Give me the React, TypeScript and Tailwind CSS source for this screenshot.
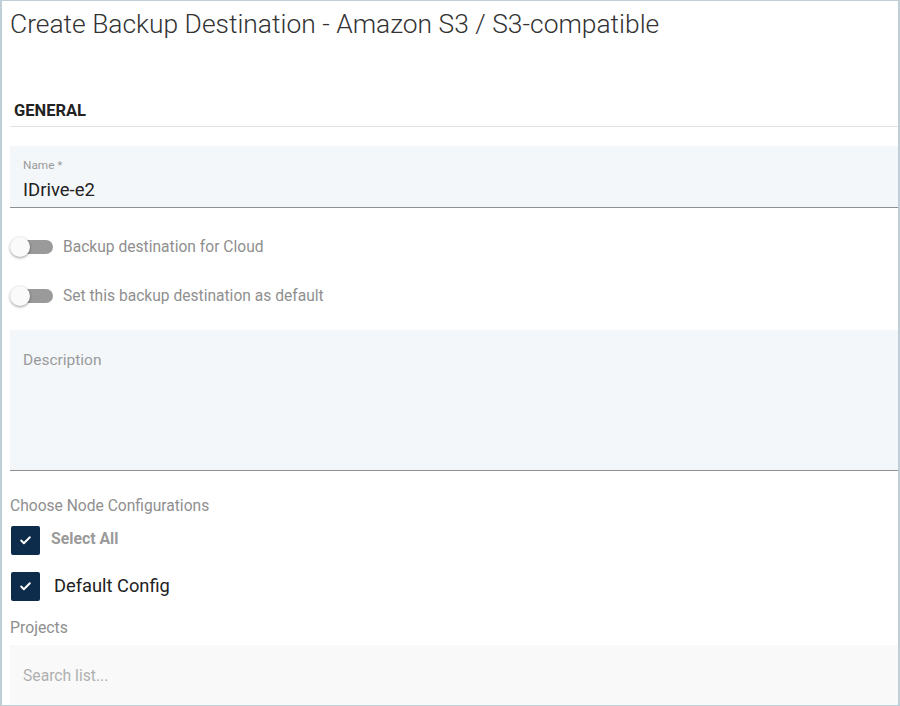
import { Check } from "lucide-react";

function Toggle({ label }: { label: string }) {
  return (
    <div className="flex h-[20px] items-center gap-[10px]">
      <div className="relative h-[20px] w-[43px]">
        <div className="absolute left-[5px] top-[3px] h-[14px] w-[38px] rounded-full bg-[#9a9a9a]" />
        <div className="absolute left-0 top-0 h-[20px] w-[20px] rounded-full bg-[#fafafa] shadow-[0_1px_3px_rgba(0,0,0,0.4)]" />
      </div>
      <span className="text-[15.6px] leading-[20px] text-[#8f8f8f]">{label}</span>
    </div>
  );
}

function CheckBox({ label, bold }: { label: string; bold?: boolean }) {
  return (
    <div className="flex h-[29px] items-center">
      <div className="ml-[1px] flex h-[29px] w-[29px] items-center justify-center rounded-[2px] bg-[#0d2b4b]">
        <Check className="h-[13px] w-[13px] text-white" strokeWidth={3.5} />
      </div>
      {bold ? (
        <span className="ml-[11px] -mt-[3px] text-[15.8px] font-bold leading-[20px] text-[#9a9a9a]">{label}</span>
      ) : (
        <span className="ml-[14px] -mt-[2px] text-[18.3px] leading-[22px] text-[#222]">{label}</span>
      )}
    </div>
  );
}

export default function App() {
  return (
    <div className="h-[706px] w-[900px] overflow-hidden border-y border-l-2 border-r-2 border-[#bfcfd7] bg-white font-['Roboto',sans-serif]">
      <div className="pl-[8px]">
        <h1 className="mt-[6px] text-[26.4px] font-light leading-[34px] text-[#333]">
          Create Backup Destination - Amazon S3 / S3-compatible
        </h1>

        <div className="mt-[60px] border-b border-[#e2e2e2] pb-[5px] pl-[4px] text-[16.5px] font-bold leading-[20px] text-[#222]">
          GENERAL
        </div>

        <div className="mt-[19px] h-[62px] border-b border-[#8f8f8f] bg-[#f4f7fa] px-[13px] pt-[12px]">
          <div className="text-[11.8px] leading-[14px] text-[#9a9a9a]">Name *</div>
          <div className="mt-[7px] text-[18.5px] leading-[22px] text-[#222]">IDrive-e2</div>
        </div>

        <div className="mt-[29px]">
          <Toggle label="Backup destination for Cloud" />
        </div>
        <div className="mt-[29px]">
          <Toggle label="Set this backup destination as default" />
        </div>

        <div className="mt-[24px] h-[141px] border-b border-[#8f8f8f] bg-[#f4f7fa] px-[13px] pt-[21px]">
          <div className="text-[15.5px] leading-[18px] text-[#9a9a9a]">Description</div>
        </div>

        <div className="mt-[26px] text-[15.6px] leading-[18px] text-[#8f8f8f]">Choose Node Configurations</div>

        <div className="mt-[11px]">
          <CheckBox label="Select All" bold />
        </div>
        <div className="mt-[17px]">
          <CheckBox label="Default Config" />
        </div>

        <div className="mt-[17px] text-[15.8px] leading-[19px] text-[#8f8f8f]">Projects</div>

        <div className="mt-[8px] h-[62px] bg-[#f9f9f9] px-[13px] pt-[21px]">
          <div className="text-[15.7px] leading-[19px] text-[#b0b0b0]">Search list...</div>
        </div>
      </div>
    </div>
  );
}
